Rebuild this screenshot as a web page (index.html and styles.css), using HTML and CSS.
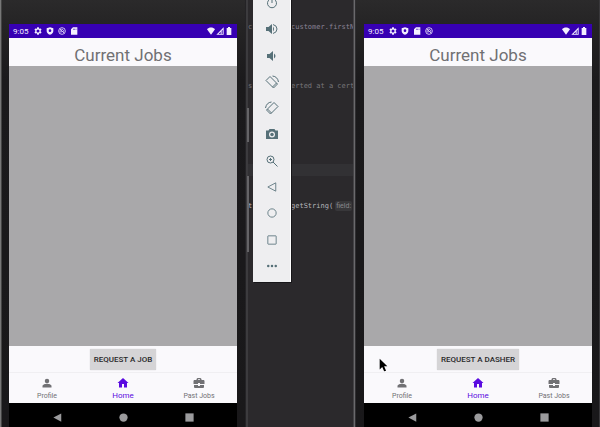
FILE: index.html
```html
<!DOCTYPE html>
<html lang="en">
<head>
<meta charset="utf-8">
<title>Current Jobs</title>
<link rel="stylesheet" href="styles.css">
</head>
<body>
<svg class="defs" aria-hidden="true">
  <symbol id="gear" viewBox="0 0 24 24"><path fill-rule="evenodd" d="M9.5 1h5l.6 3.200 2 1.200 3.100-1.100 2.500 4.300-2.500 2.200v2.400l2.500 2.200-2.500 4.300-3.100-1.100-2 1.200-.6 3.200h-5l-.6-3.200-2-1.200-3.100 1.100-2.500-4.300 2.500-2.200v-2.400L1.300 8.600l2.500-4.300 3.100 1.100 2-1.200zM12 7.500a4.500 4.500 0 1 0 0 9 4.500 4.500 0 0 0 0-9z"/></symbol>
  <symbol id="shield" viewBox="0 0 24 24"><path fill-rule="evenodd" d="M12 1 2 4v8c0 5 4 9.500 10 11.500 6-2 10-6.500 10-11.500V4zm0 6a4 4 0 1 1 0 8 4 4 0 0 1 0-8z"/></symbol>
  <symbol id="sync" viewBox="0 0 24 24"><g fill="none" stroke="currentColor" stroke-width="2.400"><circle cx="12" cy="12" r="10"/><path d="M6 6l12 12M9 17a6 6 0 0 1-2-7M10 7a6 6 0 0 1 7 7M10 12a2 2 0 0 0 3 2"/></g></symbol>
  <symbol id="sd" viewBox="0 0 24 24"><path fill-rule="evenodd" d="M9 1h13v22H3V7zM9 5v3h2V5zm4 0v3h2V5zm4 0v3h2V5z"/></symbol>
  <symbol id="wifi" viewBox="0 0 24 24"><path d="M12 23 0 7C6 0 18 0 24 7z"/></symbol>
  <symbol id="signal" viewBox="0 0 24 24"><path fill-rule="evenodd" d="M1 23 23 1v22zM8 21h6v-7zM17 11v10h3V8z"/></symbol>
  <symbol id="battery" viewBox="0 0 24 24"><path d="M9 0h6v3h4v21H5V3h4z"/></symbol>
  <symbol id="person" viewBox="0 0 24 24"><circle cx="12" cy="8" r="4.500"/><path d="M3 21v-3c0-3 6-4.500 9-4.500s9 1.500 9 4.500v3z"/></symbol>
  <symbol id="home" viewBox="0 0 24 24"><path d="M10 21v-7h4v7h6v-9h3L12 2 1 12h3v9z"/></symbol>
  <symbol id="case" viewBox="0 0 24 24"><path fill-rule="evenodd" d="M7 6V4l2-2h6l2 2v2h5l1 2v6h-9v-2h-4v2H1V8l1-2zm3 0h4V4.500h-4zM2 16h8v2h4v-2h8v4l-1 2H3l-1-2z"/></symbol>
  <symbol id="back" viewBox="0 0 24 24"><path d="M1 12 22 1v22z"/></symbol>
  <symbol id="dot" viewBox="0 0 24 24"><circle cx="12" cy="12" r="11"/></symbol>
  <symbol id="block" viewBox="0 0 24 24"><path d="M1 1h22v22H1z"/></symbol>
</svg>

<main class="desktop">
  <section class="phone phone-left" aria-label="Customer phone">
    <div class="screen">
      <header class="status">
        <span>9:05</span>
        <svg><use href="#gear"/></svg><svg><use href="#shield"/></svg><svg><use href="#sync"/></svg><svg><use href="#sd"/></svg>
        <span class="radios"><svg><use href="#wifi"/></svg><svg><use href="#signal"/></svg><svg><use href="#battery"/></svg></span>
      </header>
      <h1>Current Jobs</h1>
      <div class="jobs"></div>
      <div class="action"><button type="button">REQUEST A JOB</button></div>
      <nav class="tabs">
        <a href="#profile"><svg><use href="#person"/></svg>Profile</a>
        <a href="#home-tab" class="active" aria-current="page"><svg><use href="#home"/></svg>Home</a>
        <a href="#past"><svg><use href="#case"/></svg>Past Jobs</a>
      </nav>
      <div class="system">
        <button type="button" aria-label="Back"><svg><use href="#back"/></svg></button>
        <button type="button" aria-label="Home"><svg><use href="#dot"/></svg></button>
        <button type="button" aria-label="Overview"><svg><use href="#block"/></svg></button>
      </div>
    </div>
    <i class="key key-power"></i><i class="key key-volume"></i>
  </section>

  <section class="editor" aria-label="Code editor">
    <div class="line comment"><span>c</span><span class="name">customer.firstN</span></div>
    <div class="line comment second"><span>s</span><span>erted at a cert</span></div>
    <div class="caret-row"></div>
    <div class="line call"><span>t</span><span>getString(<em>field:</em></span></div>
  </section>

  <section class="phone phone-right" aria-label="Dasher phone">
    <div class="screen">
      <header class="status">
        <span>9:05</span>
        <svg><use href="#gear"/></svg><svg><use href="#shield"/></svg><svg><use href="#sd"/></svg><svg><use href="#sync"/></svg>
        <span class="radios"><svg><use href="#wifi"/></svg><svg><use href="#signal"/></svg><svg><use href="#battery"/></svg></span>
      </header>
      <h1>Current Jobs</h1>
      <div class="jobs"></div>
      <div class="action"><button type="button">REQUEST A DASHER</button></div>
      <nav class="tabs">
        <a href="#profile"><svg><use href="#person"/></svg>Profile</a>
        <a href="#home-tab" class="active" aria-current="page"><svg><use href="#home"/></svg>Home</a>
        <a href="#past"><svg><use href="#case"/></svg>Past Jobs</a>
      </nav>
      <div class="system">
        <button type="button" aria-label="Back"><svg><use href="#back"/></svg></button>
        <button type="button" aria-label="Home"><svg><use href="#dot"/></svg></button>
        <button type="button" aria-label="Overview"><svg><use href="#block"/></svg></button>
      </div>
      <svg class="pointer" viewBox="0 0 14 22"><path d="M1 1v17l4-4 3 7 3-1-3-7h5z"/></svg>
    </div>
  </section>

  <aside class="toolbar" aria-label="Emulator controls">
    <button type="button" aria-label="Power"><svg viewBox="0 0 24 24"><path class="o" d="M12 2v10M7 5a9 9 0 1 0 10 0"/></svg></button>
    <button type="button" aria-label="Volume up"><svg viewBox="0 0 24 24"><path d="M0 8h5l7-6v20l-7-6H0z"/><path d="M14 7q4 5 0 10z"/><path class="o" d="M14 3q8 2 8 9t-8 9"/></svg></button>
    <button type="button" aria-label="Volume down"><svg viewBox="0 0 24 24"><path d="M2 8h5l7-6v20l-7-6H2z"/><path d="M16 7q6 5 0 10z"/></svg></button>
    <button type="button" aria-label="Rotate left"><svg class="big" viewBox="0 0 28 28"><path class="o" d="M10 3 25 18l-8 8L2 11zM15 2q10 1 12 12"/><path class="o" d="m23 16-8 8"/></svg></button>
    <button type="button" aria-label="Rotate right"><svg class="big" viewBox="0 0 28 28"><path class="o" d="M18 3 3 18l8 8 15-15zM13 2Q3 3 1 14"/><path class="o" d="m5 16 8 8"/></svg></button>
    <button type="button" aria-label="Screenshot"><svg viewBox="0 0 24 24"><path fill-rule="evenodd" d="M7 2h10l2 3h5v17H0V5h5zm5 5a6 6 0 1 0 0 12 6 6 0 0 0 0-12z"/><circle cx="12" cy="13" r="3.500"/></svg></button>
    <button type="button" aria-label="Zoom"><svg viewBox="0 0 24 24"><circle class="o" cx="9" cy="9" r="7"/><path class="o" d="m14 14 9 9M6 9h6M9 6v6"/></svg></button>
    <button type="button" aria-label="Back"><svg class="small" viewBox="0 0 24 24"><path class="o" d="M2 12 21 2v20z"/></svg></button>
    <button type="button" aria-label="Home"><svg class="small" viewBox="0 0 24 24"><circle class="o" cx="12" cy="12" r="10"/></svg></button>
    <button type="button" aria-label="Overview"><svg class="small" viewBox="0 0 24 24"><rect class="o" x="2" y="2" width="20" height="20" rx="1"/></svg></button>
    <button type="button" aria-label="More"><svg class="small" viewBox="0 0 24 24"><circle cx="3" cy="12" r="3"/><circle cx="12" cy="12" r="3"/><circle cx="21" cy="12" r="3"/></svg></button>
  </aside>
</main>
</body>
</html>
```
FILE: styles.css
```css
* { box-sizing: border-box; }

body {
  margin: 0;
  background: #2b292c;
  font-family: Roboto, "Liberation Sans", sans-serif;
}

svg { display: block; fill: currentColor; }
button { border: 0; padding: 0; font: inherit; color: inherit; background: none; }
.defs { position: absolute; width: 0; height: 0; }

.desktop {
  position: relative;
  display: grid;
  grid-template-columns: 248fr 105fr 247fr;
  min-height: 100vh;
  overflow: hidden;
}

.phone {
  position: relative;
  display: flex;
  padding-top: 24px;
  background: linear-gradient(#2b2a2b, #252425 24px, #1b1a1c 80px, #19181a);
}
.phone-left {
  padding-left: 9px;
  padding-right: 11px;
  box-shadow: inset 1px 0 #777, inset 2px 0 #444, inset -2px 0 #3c3b3e, inset -3px 0 #242326;
}
.phone-right {
  padding-left: 11px;
  padding-right: 8px;
  box-shadow: inset 1px 0 #444346, inset 2px 0 #6a696c, inset 3px 0 #302f32, inset -1px 0 #39383b;
}

.key { position: absolute; right: -1px; width: 2px; background: #656467; }
.key-power { top: 108px; height: 34px; }
.key-volume { top: 176px; height: 76px; }

.screen {
  position: relative;
  display: flex;
  flex: 1;
  flex-direction: column;
  background: #faf9fc;
}

.status {
  display: flex;
  align-items: center;
  gap: 4px;
  height: 14px;
  padding: 0 4px;
  color: #f4efff;
  background: #3700b3;
  font-size: 8px;
}
.status > span:first-child { margin-right: 2px; }
.status svg { width: 8px; height: 8px; }
.radios { display: flex; gap: 1px; margin-left: auto; }

h1 {
  margin: 0;
  height: 28px;
  padding-top: 3px;
  color: #707073;
  font-size: 17px;
  font-weight: 400;
  line-height: 28px;
  text-align: center;
}

.jobs { flex: 1; background: #a9a8aa; }

.action { display: flex; justify-content: center; padding: 3px 0 2px; }
.action button {
  height: 21px;
  padding: 0 4px;
  border-radius: 1px;
  color: #28282a;
  background: #d5d4d6;
  box-shadow: 0 0 1px #b5b4b7;
  font-size: 8px;
  font-weight: 500;
}

.tabs {
  display: grid;
  grid-template-columns: repeat(3, 1fr);
  height: 31px;
  border-top: 1px solid #f0eff2;
}
.tabs a {
  display: flex;
  flex-direction: column;
  align-items: center;
  gap: 2px;
  padding-top: 4px;
  color: #717174;
  font-size: 7px;
  line-height: 10px;
  text-decoration: none;
}
.tabs svg { width: 12px; height: 12px; }
.tabs .active { color: #5a0be0; font-size: 8px; }

.system {
  display: flex;
  align-items: center;
  justify-content: center;
  gap: 57px;
  height: 24px;
  padding-top: 4px;
  color: #9b9b9d;
  background: #000;
}
.system svg { width: 9px; height: 9px; }

.pointer {
  position: absolute;
  left: 15px;
  top: 334px;
  width: 9px;
  height: 14px;
  fill: #000;
}

.editor {
  padding-top: 22px;
  overflow: hidden;
  font: 7px/10px "DejaVu Sans Mono", monospace;
}
.line { display: grid; grid-template-columns: 5px 1fr; column-gap: 38px; height: 10px; white-space: nowrap; }
.comment { color: #77767a; }
.name { color: #8a8396; }
.second { margin-top: 49px; }
.caret-row { height: 12px; margin: 73px 0 25px; background: #323134; }
.call { color: #b5b5ba; }
.call em { margin-left: 2px; padding: 1px; border-radius: 2px; color: #88888c; background: #38373a; font-family: Roboto, sans-serif; font-style: normal; }

.toolbar {
  position: absolute;
  left: 253px;
  top: -10px;
  display: flex;
  flex-direction: column;
  width: 38px;
  height: 292px;
  padding-bottom: 3px;
  color: #567078;
  background: #eeeef0;
  border-right: 1px solid #fff;
  box-shadow: 1px 1px #171619;
}
.toolbar button { display: flex; flex: 1; align-items: center; justify-content: center; }
.toolbar svg { width: 12px; height: 12px; }
.toolbar .big { width: 14px; height: 14px; }
.toolbar .small { width: 10px; height: 10px; }
.o { fill: none; stroke: currentColor; stroke-width: 2; }
```
